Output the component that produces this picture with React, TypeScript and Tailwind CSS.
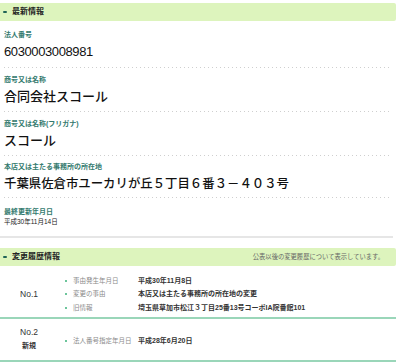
const font = { fontFamily: '"Liberation Sans", "Noto Sans CJK JP", sans-serif' };

const dotted =
  "h-px w-full bg-[linear-gradient(to_right,#cfcfcf_0,#cfcfcf_1px,transparent_1px)] bg-[length:4px_1px] bg-repeat-x";

function SectionHead({ title, note }: { title: string; note?: string }) {
  return (
    <div className="flex h-[18px] items-center rounded-r-[2px] bg-[#ddf4bd]">
      <span className="ml-[3px] h-[2.5px] w-[4px] rounded-[1px] bg-[#1f6357]" />
      <span className="ml-[5px] text-[8px] font-bold leading-none text-[#222]">{title}</span>
      {note && <span className="ml-auto mr-[12px] text-[6.3px] leading-none text-[#666]">{note}</span>}
    </div>
  );
}

function Field({
  label,
  value,
  pt,
  pb,
  size = "text-[13px]",
}: {
  label: string;
  value: string;
  pt: string;
  pb: string;
  size?: string;
}) {
  return (
    <div className="px-[4px]">
      <div className={pt}>
        <div className="text-[7px] font-bold leading-[10px] text-[#337a6e]">{label}</div>
        <div className={`mt-[2px] ${size} font-medium leading-[20px] text-[#111]`}>{value}</div>
      </div>
      <div className={pb} />
      <div className={dotted} />
    </div>
  );
}

function Item({ label, value }: { label: string; value: string }) {
  return (
    <div className="flex h-[13.5px] items-center">
      <div className="flex w-[75px] items-center">
        <span className="ml-[2px] mr-[6px] h-[2px] w-[2px] bg-[#6cc59b]" />
        <span className="text-[6.5px] text-[#8a8a8a]">{label}</span>
      </div>
      <span className="text-[7px] font-bold text-[#333]">{value}</span>
    </div>
  );
}

export default function App() {
  return (
    <div className="w-[399px] bg-white pr-[3px] pt-[3px]" style={font}>
      <SectionHead title="最新情報" />

      <Field
        label="法人番号"
        value="6030003008981"
        pt="pt-[9px]"
        pb="h-[5px]"
        size="text-[13px] tracking-[-0.4px]"
      />
      <Field label="商号又は名称" value="合同会社スコール" pt="pt-[7px]" pb="h-[4px]" />
      <Field label="商号又は名称(フリガナ)" value="スコール" pt="pt-[7px]" pb="h-[4px]" />
      <Field
        label="本店又は主たる事務所の所在地"
        value="千葉県佐倉市ユーカリが丘５丁目６番３－４０３号"
        pt="pt-[6px]"
        pb="h-[3px]"
        size="text-[12.4px]"
      />

      <div className="px-[4px] pb-[9px] pt-[9px]">
        <div className="text-[7px] font-bold leading-[10px] text-[#337a6e]">最終更新年月日</div>
        <div className="text-[6.5px] leading-[10px] text-[#222]">平成30年11月14日</div>
      </div>

      <div className="h-[2px] w-[393px] bg-[#e6e6e6]" />

      <div className="mt-[10px]">
        <SectionHead title="変更履歴情報" note="公表以後の変更履歴について表示しています。" />
      </div>

      <div className="flex border-b-2 border-[#9ad6b9] pb-[2px] pt-[8px]">
        <div className="flex w-[58px] items-center justify-center text-[8.5px] text-[#333]">No.1</div>
        <div className="ml-[5px] flex-1">
          <Item label="事由発生年月日" value="平成30年11月8日" />
          <Item label="変更の事由" value="本店又は主たる事務所の所在地の変更" />
          <Item label="旧情報" value="埼玉県草加市松江３丁目25番13号コーポIA院番館101" />
        </div>
      </div>

      <div className="flex border-b-2 border-[#9ad6b9] pb-[9px] pt-[7.5px]">
        <div className="flex w-[58px] flex-col items-center">
          <div className="text-[8.5px] leading-[12px] text-[#333]">No.2</div>
          <div className="mt-[3px] text-[7px] font-bold leading-[10px] text-[#333]">新規</div>
        </div>
        <div className="ml-[5px] flex flex-1 items-center pt-[5px]">
          <Item label="法人番号指定年月日" value="平成28年6月20日" />
        </div>
      </div>
    </div>
  );
}
